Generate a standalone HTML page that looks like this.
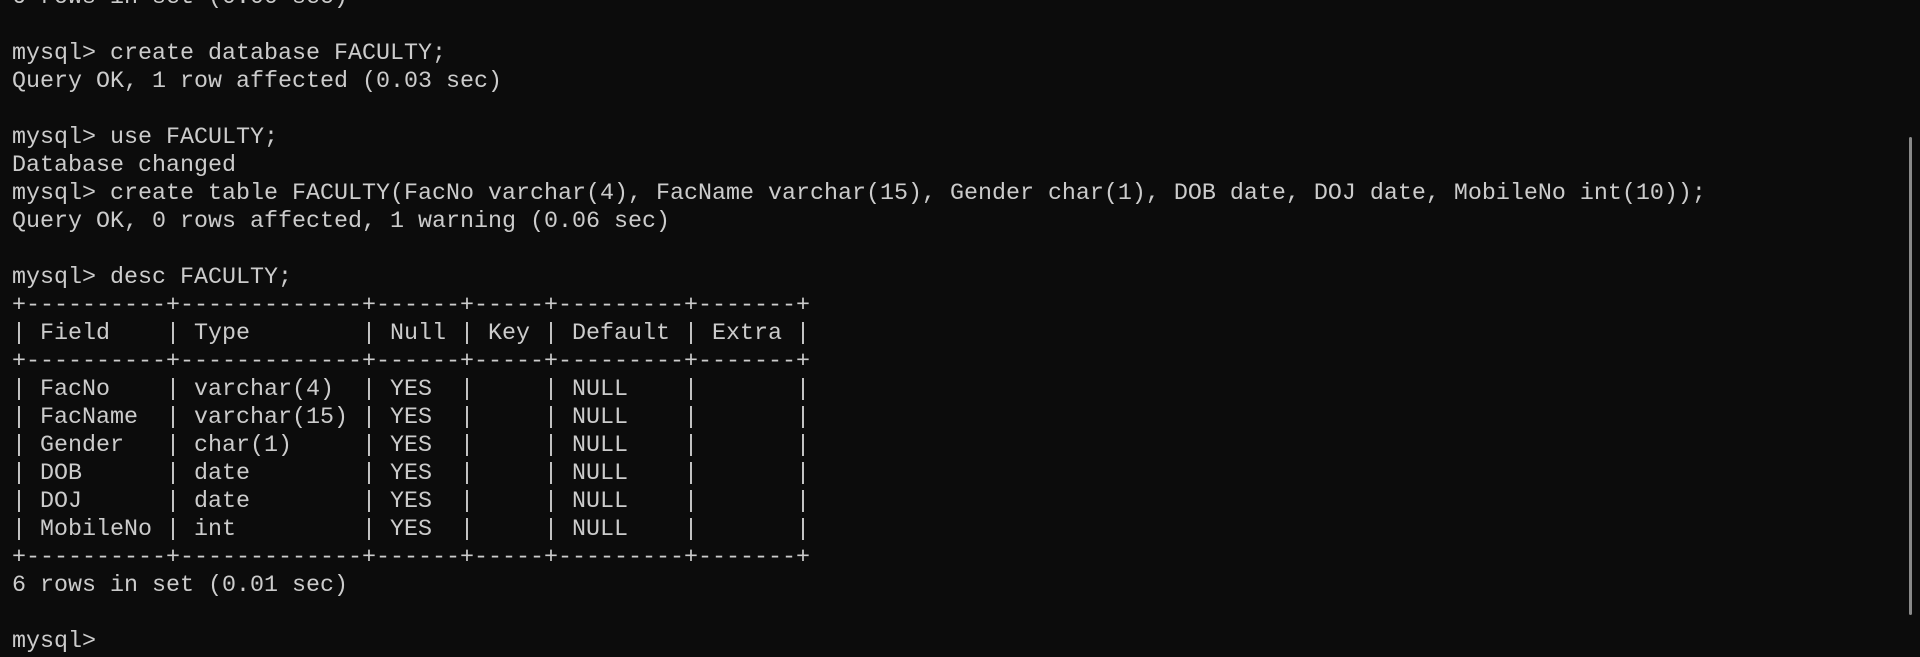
<!DOCTYPE html>
<html><head><meta charset="utf-8"><style>
html,body{margin:0;padding:0;background:#0c0c0c;width:1920px;height:657px;overflow:hidden}
pre{position:absolute;left:12px;top:-16px;margin:0;font-family:"Liberation Mono",monospace;font-size:23.33px;line-height:28px;color:#cccccc;white-space:pre}
.sb{position:absolute;left:1909px;top:137px;width:3px;height:478px;background:#8a8a8a;border-radius:2px}
</style></head><body>
<pre>6 rows in set (0.00 sec)

mysql&gt; create database FACULTY;
Query OK, 1 row affected (0.03 sec)

mysql&gt; use FACULTY;
Database changed
mysql&gt; create table FACULTY(FacNo varchar(4), FacName varchar(15), Gender char(1), DOB date, DOJ date, MobileNo int(10));
Query OK, 0 rows affected, 1 warning (0.06 sec)

mysql&gt; desc FACULTY;
+----------+-------------+------+-----+---------+-------+
| Field    | Type        | Null | Key | Default | Extra |
+----------+-------------+------+-----+---------+-------+
| FacNo    | varchar(4)  | YES  |     | NULL    |       |
| FacName  | varchar(15) | YES  |     | NULL    |       |
| Gender   | char(1)     | YES  |     | NULL    |       |
| DOB      | date        | YES  |     | NULL    |       |
| DOJ      | date        | YES  |     | NULL    |       |
| MobileNo | int         | YES  |     | NULL    |       |
+----------+-------------+------+-----+---------+-------+
6 rows in set (0.01 sec)

mysql&gt;</pre>
<div class="sb"></div>
</body></html>
